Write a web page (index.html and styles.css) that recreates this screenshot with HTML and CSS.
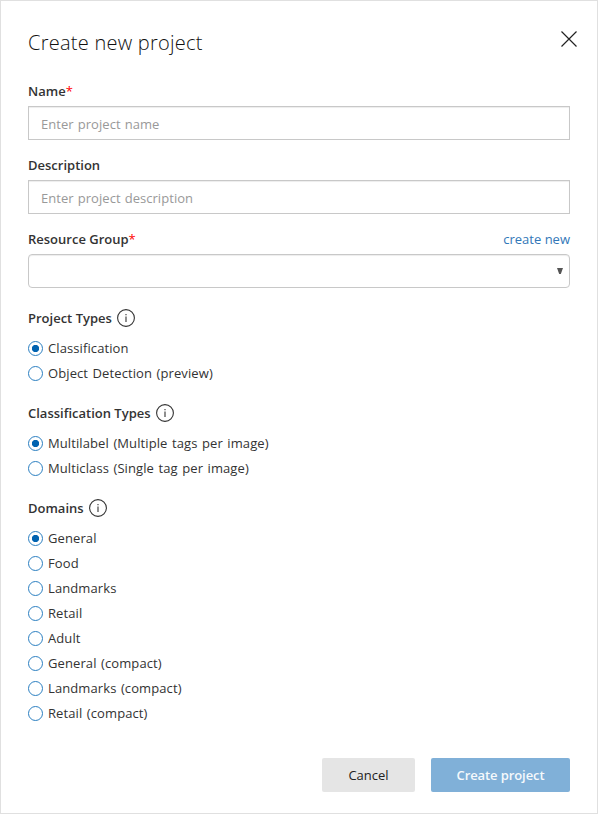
FILE: index.html
```html
<!DOCTYPE html>
<html lang="en">
<head>
    <meta charset="utf-8">
    <title>Create new project</title>
    <link rel="stylesheet" href="styles.css">
</head>
<body>
    <form class="dialog">
        <div class="dialog-header">
            <h1>Create new project</h1>
            <button type="button" class="close" aria-label="Close">
                <svg width="16" height="16" viewBox="0 0 16 16"><path d="M.5.5l15 15M15.5.5l-15 15"/></svg>
            </button>
        </div>

        <div class="field">
            <label class="field-label" for="name">Name<span class="required">*</span></label>
            <input class="text-input" id="name" type="text" placeholder="Enter project name">
        </div>

        <div class="field">
            <label class="field-label" for="description">Description</label>
            <input class="text-input" id="description" type="text" placeholder="Enter project description">
        </div>

        <div class="field">
            <div class="label-row">
                <label class="field-label" for="group">Resource Group<span class="required">*</span></label>
                <a class="create-link" href="#">create new</a>
            </div>
            <div class="select" id="group">
                <svg width="6" height="6" viewBox="0 0 6 6"><path d="M0 0h6L3.8 6H2.2z"/></svg>
            </div>
        </div>

        <div class="options types">
            <div class="options-title">
                <span class="field-label">Project Types</span>
                <svg class="info" width="18" height="18" viewBox="0 0 18 18"><circle cx="9" cy="9" r="8.4"/><path d="M9 7.5V13M9 5v1.2"/></svg>
            </div>
            <label class="option"><input type="radio" name="type" checked><span>Classification</span></label>
            <label class="option"><input type="radio" name="type"><span>Object Detection (preview)</span></label>
        </div>

        <div class="options">
            <div class="options-title">
                <span class="field-label">Classification Types</span>
                <svg class="info" width="18" height="18" viewBox="0 0 18 18"><circle cx="9" cy="9" r="8.4"/><path d="M9 7.5V13M9 5v1.2"/></svg>
            </div>
            <label class="option"><input type="radio" name="class" checked><span>Multilabel (Multiple tags per image)</span></label>
            <label class="option"><input type="radio" name="class"><span>Multiclass (Single tag per image)</span></label>
        </div>

        <div class="options">
            <div class="options-title">
                <span class="field-label">Domains</span>
                <svg class="info" width="18" height="18" viewBox="0 0 18 18"><circle cx="9" cy="9" r="8.4"/><path d="M9 7.5V13M9 5v1.2"/></svg>
            </div>
            <label class="option"><input type="radio" name="domain" checked><span>General</span></label>
            <label class="option"><input type="radio" name="domain"><span>Food</span></label>
            <label class="option"><input type="radio" name="domain"><span>Landmarks</span></label>
            <label class="option"><input type="radio" name="domain"><span>Retail</span></label>
            <label class="option"><input type="radio" name="domain"><span>Adult</span></label>
            <label class="option"><input type="radio" name="domain"><span>General (compact)</span></label>
            <label class="option"><input type="radio" name="domain"><span>Landmarks (compact)</span></label>
            <label class="option"><input type="radio" name="domain"><span>Retail (compact)</span></label>
        </div>

        <div class="actions">
            <button type="button" class="btn cancel">Cancel</button>
            <button type="submit" class="btn create" disabled>Create project</button>
        </div>
    </form>
</body>
</html>
```

FILE: styles.css
```css
* {
    box-sizing: border-box;
}
body {
    margin: 0;
    font-family: "Segoe UI", "Open Sans", "Noto Sans", sans-serif;
    font-size: 13px;
    line-height: 20px;
    color: #333;
    background: #fff;
}
.dialog {
    height: 814px;
    padding: 27px 27px 21px;
    border: 1px solid #e0e0e0;
    display: flex;
    flex-direction: column;
}
.dialog-header {
    display: flex;
    justify-content: space-between;
    align-items: flex-start;
    height: 53px;
}
h1 {
    margin: 0;
    font-size: 20px;
    font-weight: 300;
    line-height: 29px;
    letter-spacing: 0.25px;
    color: #111;
}
.close {
    display: flex;
    margin: 3px -7px 0 0;
    padding: 0;
    border: none;
    background: none;
    cursor: pointer;
}
.close path {
    stroke: #222;
    stroke-width: 1.2;
}
.field {
    margin-bottom: 15px;
}
.field-label {
    display: block;
    font-weight: 600;
}
.required {
    color: #f00;
    font-weight: 400;
}
.label-row {
    display: flex;
    justify-content: space-between;
}
.create-link {
    color: #3277b8;
    text-decoration: none;
}
.text-input,
.select {
    display: block;
    width: 100%;
    height: 34px;
    margin-top: 5px;
    padding: 3px 12px 1px;
    border: 1px solid #c8c8c8;
    background: #fff;
    box-shadow: inset 0 1px 1px rgba(0, 0, 0, 0.075);
    font: inherit;
    letter-spacing: 0.05px;
    word-spacing: 0.6px;
}
.text-input::placeholder {
    color: #999;
}
.select {
    display: flex;
    justify-content: flex-end;
    align-items: center;
    padding: 0 6px;
    border-radius: 4px;
}
.select path {
    fill: #555;
}
.options {
    margin-bottom: 17px;
}
.types {
    margin-top: 5px;
}
.options-title {
    display: flex;
    align-items: center;
    gap: 5px;
    margin-bottom: 8px;
}
.info {
    fill: none;
    stroke: #333;
    stroke-width: 1.1;
}
.option {
    display: flex;
    align-items: center;
    gap: 5px;
    height: 25px;
}
.option span {
    padding-bottom: 2px;
    letter-spacing: 0.1px;
    word-spacing: 1px;
}
.option input {
    appearance: none;
    width: 15px;
    height: 15px;
    margin: 0;
    border: 1px solid #2b7fc1;
    border-radius: 50%;
}
.option input:checked {
    background: radial-gradient(circle, #0063b1 3.3px, transparent 4px);
}
.actions {
    display: flex;
    justify-content: flex-end;
    gap: 16px;
    margin-top: auto;
}
.btn {
    height: 34px;
    padding: 0;
    border: none;
    border-radius: 2px;
    font: inherit;
}
.cancel {
    width: 93px;
    background: #e5e5e5;
    color: #222;
}
.create {
    width: 139px;
    background: #80b0d8;
    color: #f5f9fc;
    font-weight: 600;
    letter-spacing: -0.1px;
}
```
